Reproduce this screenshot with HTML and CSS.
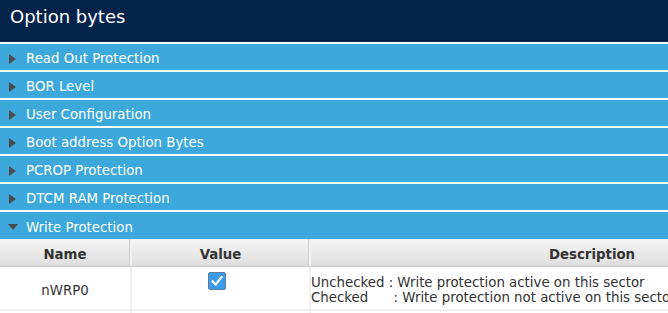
FILE: index.html
```html
<!DOCTYPE html>
<html>
<head>
<meta charset="utf-8">
<link rel="stylesheet" href="styles.css">
</head>
<body>
<div class="page">
  <div class="title">Option bytes</div>
  <div class="section"><span class="tri tri-right"></span><span class="label">Read Out Protection</span></div>
  <div class="section"><span class="tri tri-right"></span><span class="label">BOR Level</span></div>
  <div class="section"><span class="tri tri-right"></span><span class="label">User Configuration</span></div>
  <div class="section"><span class="tri tri-right"></span><span class="label">Boot address Option Bytes</span></div>
  <div class="section"><span class="tri tri-right"></span><span class="label">PCROP Protection</span></div>
  <div class="section"><span class="tri tri-right"></span><span class="label">DTCM RAM Protection</span></div>
  <div class="section open"><span class="tri tri-down"></span><span class="label">Write Protection</span></div>
  <div class="table">
    <div class="row head">
      <div class="cell c-name">Name</div>
      <div class="cell c-value">Value</div>
      <div class="cell c-desc">Description</div>
    </div>
    <div class="row body">
      <div class="cell c-name">nWRP0</div>
      <div class="cell c-value">
        <span class="checkbox">
          <svg width="16" height="16" viewBox="0 0 16 16"><path d="M3.5 8.2 L6.6 11.6 L12.6 3.8" fill="none" stroke="#fff" stroke-width="2.2" stroke-linecap="round" stroke-linejoin="round"/></svg>
        </span>
      </div>
      <div class="cell c-desc desc">Unchecked : Write protection active on this sector
Checked      : Write protection not active on this sector</div>
    </div>
    <div class="row body">
      <div class="cell c-name"></div>
      <div class="cell c-value"></div>
      <div class="cell c-desc desc"></div>
    </div>
  </div>
</div>
</body>
</html>
```
FILE: styles.css
```css
html, body {
  margin: 0;
  padding: 0;
  background: #ffffff;
}
body {
  width: 668px;
  height: 313px;
  overflow: hidden;
  font-family: "DejaVu Sans", "Liberation Sans", sans-serif;
}
.page {
  display: flex;
  flex-direction: column;
  width: 668px;
}
.title {
  height: 42px;
  box-sizing: border-box;
  background: #03234b;
  color: #ffffff;
  font-size: 18px;
  line-height: 21px;
  padding: 6px 0 0 10px;
}
.section {
  display: flex;
  align-items: center;
  height: 28px;
  box-sizing: border-box;
  border-top: 2px solid #ffffff;
  padding-top: 3px;
  background: #3ca8dc;
  background-clip: padding-box;
  color: #ffffff;
  font-size: 13.33px;
  line-height: 15px;
}
.section.open {
  height: 29px;
}
.tri {
  display: block;
  width: 0;
  height: 0;
  flex: none;
}
.tri-right {
  border-left: 7px solid #4a4a4a;
  border-top: 5px solid transparent;
  border-bottom: 5px solid transparent;
  margin: 0 10px 0 9px;
}
.tri-down {
  border-top: 6px solid #4a4a4a;
  border-left: 5px solid transparent;
  border-right: 5px solid transparent;
  margin: 0 8px 0 8px;
}
.table {
  display: flex;
  flex-direction: column;
  width: 873px;
  color: #333333;
  font-size: 13.33px;
}
.row {
  display: flex;
}
.cell {
  box-sizing: border-box;
  flex: none;
  display: flex;
  align-items: center;
  justify-content: center;
}
.c-name {
  width: 132px;
  border-right: 2px solid #f0f0f0;
}
.c-value {
  width: 179px;
  border-right: 2px solid #f0f0f0;
}
.c-desc {
  width: 562px;
}
.row.head {
  height: 27px;
  background: linear-gradient(#f5f5f5, #dedede);
  border-bottom: 1px solid #c9c9c9;
  font-weight: bold;
  line-height: 23px;
}
.row.head .cell {
  padding-top: 3px;
}
.row.head .c-name,
.row.head .c-value {
  border-right: 2px solid #f2f2f2;
  box-shadow: inset -1px 0 0 #cfcfcf;
}
.row.body {
  height: 42px;
  border-bottom: 2px solid #f0f0f0;
  line-height: 15px;
}
.row.body .cell {
  padding-top: 4px;
}
.row.body .c-value {
  align-items: flex-start;
  padding-top: 5px;
  padding-right: 7px;
}
.desc {
  justify-content: flex-start;
  white-space: pre;
}
.checkbox {
  display: flex;
  align-items: center;
  justify-content: center;
  width: 18px;
  height: 18px;
  box-sizing: border-box;
  background: #3d9be9;
  border: 1px solid #607d9a;
  border-radius: 2px;
}
```
